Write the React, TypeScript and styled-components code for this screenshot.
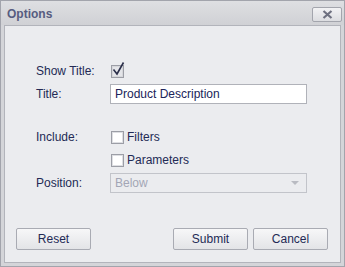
import styled, { createGlobalStyle } from 'styled-components';

const GlobalStyle = createGlobalStyle`
  html, body {
    margin: 0;
    padding: 0;
    background: #d4d5d9;
  }
  * {
    box-sizing: border-box;
  }
`;

export default function App() {
  return (
    <>
      <GlobalStyle />
      <Window>
        <TitleBar>
          <Caption>Options</Caption>
          <CloseButton type="button">
            <svg width="11" height="9" viewBox="0 0 11 9">
              <path d="M1.5 1 L9.5 8 M9.5 1 L1.5 8" stroke="#6e7080" strokeWidth="2.2" />
            </svg>
          </CloseButton>
        </TitleBar>
        <Content>
          <Form>
            <Row>
              <Label>Show Title:</Label>
              <CheckWrap>
                <Box $checked />
                <CheckMark width="14" height="16" viewBox="0 0 14 16">
                  <path d="M2.5 8.5 L6 13 L12.5 1.5" stroke="#2b2f4a" strokeWidth="1.6" fill="none" />
                </CheckMark>
              </CheckWrap>
            </Row>
            <Row>
              <Label>Title:</Label>
              <TextInput defaultValue="Product Description" />
            </Row>
            <Spacer />
            <Row>
              <Label>Include:</Label>
              <CheckItem>
                <Box />
                <ItemText>Filters</ItemText>
              </CheckItem>
            </Row>
            <Row>
              <Label />
              <CheckItem>
                <Box />
                <ItemText>Parameters</ItemText>
              </CheckItem>
            </Row>
            <Row>
              <Label>Position:</Label>
              <Combo>
                <ComboText>Below</ComboText>
                <Arrow />
              </Combo>
            </Row>
          </Form>
          <Footer>
            <Button type="button">Reset</Button>
            <Actions>
              <Button type="button">Submit</Button>
              <Button type="button">Cancel</Button>
            </Actions>
          </Footer>
        </Content>
      </Window>
    </>
  );
}

const Window = styled.div`
  display: flex;
  flex-direction: column;
  width: 345px;
  height: 267px;
  border: 1px solid #a2a4ac;
  background: #d4d5d9;
  font-family: 'Liberation Sans', Arial, sans-serif;
  font-size: 12px;
  color: #232a55;
`;

const TitleBar = styled.div`
  display: flex;
  align-items: center;
  justify-content: space-between;
  height: 24px;
  padding: 0 2px 0 6px;
  background: linear-gradient(#dedfe2, #d0d1d5);
`;

const Caption = styled.span`
  font-weight: bold;
  font-size: 12px;
  color: #575c80;
  padding-top: 2px;
`;

const CloseButton = styled.button`
  display: flex;
  align-items: center;
  justify-content: center;
  width: 30px;
  height: 15px;
  margin-top: 2px;
  padding: 0;
  border: 1px solid #a3a5ad;
  border-radius: 2px;
  background: linear-gradient(#f2f2f4, #dcdde1);
`;

const Content = styled.div`
  flex: 1;
  display: flex;
  flex-direction: column;
  justify-content: space-between;
  margin: 0 3px 3px 3px;
  border: 1px solid #b2b4bb;
  background: #ebecef;
  padding: 34px 12px 12px 11px;
`;

const Form = styled.div`
  display: flex;
  flex-direction: column;
  gap: 1px;
  padding-left: 20px;
`;

const Row = styled.div`
  display: flex;
  align-items: center;
  height: 22px;
`;

const Spacer = styled.div`
  height: 19px;
`;

const Label = styled.span`
  width: 74px;
  flex-shrink: 0;
  color: #232a55;
`;

const CheckWrap = styled.div`
  position: relative;
  display: flex;
  align-items: center;
  margin-left: 1px;
`;

const CheckMark = styled.svg`
  position: absolute;
  left: 0px;
  top: -4px;
`;

const Box = styled.span<{ $checked?: boolean }>`
  display: inline-block;
  width: 13px;
  height: 13px;
  border: 1px solid #9c9ea6;
  background: ${(p) => (p.$checked ? '#e4e5e9' : '#ffffff')};
  box-shadow: inset 0 0 0 1px ${(p) => (p.$checked ? '#d6d7db' : '#dedfe3')};
`;

const CheckItem = styled.label`
  display: flex;
  align-items: center;
  gap: 3px;
  margin-left: 1px;
`;

const ItemText = styled.span`
  color: #232a55;
`;

const TextInput = styled.input`
  width: 197px;
  height: 20px;
  padding: 0 4px;
  border: 1px solid #b0b2b9;
  background: #ffffff;
  font-family: 'Liberation Sans', Arial, sans-serif;
  font-size: 12px;
  color: #20245a;
  outline: none;
`;

const Combo = styled.div`
  display: flex;
  align-items: center;
  justify-content: space-between;
  width: 197px;
  height: 20px;
  padding: 0 7px 0 4px;
  border: 1px solid #c2c4ca;
  background: #ebecef;
`;

const ComboText = styled.span`
  color: #a3a6b5;
`;

const Arrow = styled.span`
  width: 0;
  height: 0;
  border-left: 4px solid transparent;
  border-right: 4px solid transparent;
  border-top: 4px solid #b9bbc2;
`;

const Footer = styled.div`
  display: flex;
  justify-content: space-between;
  align-items: center;
`;

const Actions = styled.div`
  display: flex;
  gap: 5px;
`;

const Button = styled.button`
  width: 75px;
  height: 22px;
  padding: 0;
  border: 1px solid #a9abb3;
  border-radius: 2px;
  background: linear-gradient(#f7f7f8, #e3e4e7);
  font-family: 'Liberation Sans', Arial, sans-serif;
  font-size: 12px;
  color: #232a55;
`;
